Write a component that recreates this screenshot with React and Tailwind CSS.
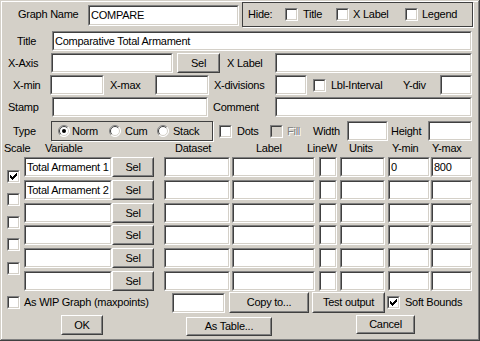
const CHECK = [
  [6, 0], [5, 1], [6, 1], [0, 2], [4, 2], [5, 2], [6, 2],
  [0, 3], [1, 3], [3, 3], [4, 3], [5, 3],
  [0, 4], [1, 4], [2, 4], [3, 4], [4, 4],
  [1, 5], [2, 5], [3, 5], [2, 6],
];

function Sunken({ className = "", inner = "bg-white", children }) {
  return (
    <div className={`shrink-0 border border-t-[#808080] border-l-[#808080] border-r-white border-b-white ${className}`}>
      <div className={`h-full w-full border border-t-[#404040] border-l-[#404040] border-r-[#d4d0c8] border-b-[#d4d0c8] ${inner}`}>
        {children}
      </div>
    </div>
  );
}

function Edit({ className = "", value }) {
  return (
    <Sunken className={className} inner="flex items-center bg-white pl-[1px] overflow-hidden whitespace-nowrap">
      {value}
    </Sunken>
  );
}

function Btn({ className = "", children }) {
  return (
    <div className={`shrink-0 border border-t-white border-l-white border-r-[#404040] border-b-[#404040] ${className}`}>
      <div className="flex h-full w-full items-center justify-center border border-t-[#d4d0c8] border-l-[#d4d0c8] border-r-[#808080] border-b-[#808080] whitespace-nowrap">
        {children}
      </div>
    </div>
  );
}

function Check({ checked, disabled, className = "" }) {
  return (
    <Sunken className={`h-[13px] w-[13px] ${className}`} inner={disabled ? "bg-[#d4d0c8]" : "bg-white"}>
      {checked && (
        <svg width="9" height="9" viewBox="0 0 9 9" shapeRendering="crispEdges" className="block">
          {CHECK.map(([x, y]) => (
            <rect key={`${x}-${y}`} x={x + 1} y={y + 1} width="1" height="1" fill="#000" />
          ))}
        </svg>
      )}
    </Sunken>
  );
}

function Radio({ checked }) {
  return (
    <svg width="12" height="12" viewBox="0 0 12 12" className="shrink-0 block">
      <circle cx="6" cy="6" r="5.5" fill="#fff" />
      <path d="M2.1 9.9 A5.5 5.5 0 0 1 9.9 2.1" stroke="#808080" fill="none" />
      <path d="M9.9 2.1 A5.5 5.5 0 0 1 2.1 9.9" stroke="#fff" fill="none" />
      <path d="M2.8 9.2 A4.5 4.5 0 0 1 9.2 2.8" stroke="#404040" fill="none" />
      <path d="M9.2 2.8 A4.5 4.5 0 0 1 2.8 9.2" stroke="#d4d0c8" fill="none" />
      {checked && <circle cx="6" cy="6" r="2" fill="#000" />}
    </svg>
  );
}

function L({ w, className = "", children }) {
  return <span className={`shrink-0 whitespace-nowrap ${w} ${className}`}>{children}</span>;
}

const rows = [
  { v: "Total Armament 1", min: "0", max: "800", top: "mt-0" },
  { v: "Total Armament 2", top: "mt-[3px]" },
  { v: "", top: "mt-[3px]" },
  { v: "", top: "mt-[2px]" },
  { v: "", top: "mt-[3px]" },
  { v: "", top: "mt-[3px]" },
];

export default function App() {
  return (
    <div className="flex h-[341px] w-[480px] flex-col overflow-hidden bg-[#d4d0c8] font-['Liberation_Sans',Arial,sans-serif] text-[11px] leading-none tracking-[-0.25px] text-black shadow-[inset_-1px_-1px_0_#404040,inset_1px_1px_0_#d4d0c8,inset_-2px_-2px_0_#808080,inset_2px_2px_0_#fff]">
      {/* graph name + hide */}
      <div className="mt-[2px] flex h-[25px] shrink-0 items-center">
        <L w="ml-[18px] w-[70px]">Graph Name</L>
        <Edit className="mt-[1px] h-[21px] w-[151px]" value="COMPARE" />
        <div className="ml-[3px] flex h-[25px] w-[231px] shrink-0 items-center border border-[#404040] shadow-[1px_1px_0_#fff]">
          <L w="ml-[5px] w-[37px]">Hide:</L>
          <Check />
          <L w="ml-[5px] w-[33px]">Title</L>
          <Check />
          <L w="ml-[4px] w-[52px]">X Label</L>
          <Check />
          <L w="ml-[4px]">Legend</L>
        </div>
      </div>

      <div className="mt-[4px] flex h-[20px] shrink-0 items-center">
        <L w="ml-[17px] w-[35px]">Title</L>
        <Edit className="h-[20px] w-[420px]" value="Comparative Total Armament" />
      </div>

      <div className="mt-[2px] flex h-[20px] shrink-0 items-center">
        <L w="ml-[8px] w-[43px]">X-Axis</L>
        <Edit className="h-[20px] w-[122px]" />
        <Btn className="ml-[4px] h-[20px] w-[43px]">Sel</Btn>
        <L w="ml-[7px] w-[48px]">X Label</L>
        <Edit className="h-[20px] w-[197px]" />
      </div>

      <div className="mt-[2px] flex h-[20px] shrink-0 items-center">
        <L w="ml-[13px] w-[37px]">X-min</L>
        <Edit className="h-[20px] w-[54px]" />
        <L w="ml-[6px] w-[45px]">X-max</L>
        <Edit className="h-[20px] w-[54px]" />
        <L w="ml-[5px] w-[61px]">X-divisions</L>
        <Edit className="h-[20px] w-[32px]" />
        <Check className="ml-[6px]" />
        <L w="ml-[5px] w-[72px]">Lbl-Interval</L>
        <L w="w-[37px]">Y-div</L>
        <Edit className="h-[20px] w-[32px]" />
      </div>

      <div className="mt-[2px] flex h-[20px] shrink-0 items-center">
        <L w="ml-[8px] w-[44px]">Stamp</L>
        <Edit className="h-[20px] w-[156px]" />
        <L w="ml-[5px] w-[62px]">Comment</L>
        <Edit className="h-[20px] w-[197px]" />
      </div>

      {/* type row */}
      <div className="mt-[4px] flex h-[20px] shrink-0 items-center">
        <L w="ml-[13px] w-[38px]">Type</L>
        <div className="flex h-[20px] w-[162px] shrink-0 items-center border border-[#404040] shadow-[1px_1px_0_#fff]">
          <span className="ml-[6px]" />
          <Radio checked />
          <L w="ml-[2px] w-[37px]">Norm</L>
          <Radio />
          <L w="ml-[4px] w-[32px]">Cum</L>
          <Radio />
          <L w="ml-[4px]">Stack</L>
        </div>
        <Check className="ml-[6px]" />
        <L w="ml-[5px] w-[33px]">Dots</L>
        <Check disabled />
        <L w="ml-[4px] w-[26px]" className="text-[#808080] [text-shadow:1px_1px_0_#fff]">Fill</L>
        <L w="w-[34px]">Width</L>
        <Edit className="h-[20px] w-[41px]" />
        <L w="ml-[3px] w-[37px]">Height</L>
        <Edit className="h-[20px] w-[44px]" />
      </div>

      {/* column headers */}
      <div className="mt-[1px] flex h-[12px] shrink-0 items-center">
        <L w="ml-[4px] w-[41px]">Scale</L>
        <L w="w-[130px]">Variable</L>
        <L w="w-[81px]">Dataset</L>
        <L w="w-[51px]">Label</L>
        <L w="w-[42px]">LineW</L>
        <L w="w-[43px]">Units</L>
        <L w="w-[40px]">Y-min</L>
        <L w="">Y-max</L>
      </div>

      {/* variable table */}
      <div className="mt-[3px] flex shrink-0">
        <div className="ml-[7px] flex w-[13px] shrink-0 flex-col">
          <Check checked className="mt-[13px]" />
          <Check className="mt-[10px]" />
          <Check className="mt-[10px]" />
          <Check className="mt-[9px]" />
          <Check className="mt-[11px]" />
        </div>
        <div className="ml-[4px] flex flex-col">
          {rows.map((r, i) => (
            <div key={i} className={`flex h-[20px] items-center ${r.top}`}>
              <Edit className="h-[20px] w-[88px]" value={r.v} />
              <Btn className="h-[20px] w-[42px]">Sel</Btn>
              <Edit className="ml-[10px] h-[20px] w-[66px]" />
              <Edit className="ml-[2px] h-[20px] w-[83px]" />
              <Edit className="ml-[4px] h-[20px] w-[18px]" />
              <Edit className="ml-[3px] h-[20px] w-[45px]" />
              <Edit className="ml-[3px] h-[20px] w-[42px]" value={r.min} />
              <Edit className="ml-[1px] h-[20px] w-[41px]" value={r.max} />
            </div>
          ))}
        </div>
      </div>

      {/* wip row */}
      <div className="mt-[1px] flex h-[21px] shrink-0 items-center">
        <Check className="ml-[7px]" />
        <L w="ml-[4px] w-[148px]">As WIP Graph (maxpoints)</L>
        <Edit className="h-[20px] w-[53px]" />
        <Btn className="ml-[4px] h-[21px] w-[80px]">Copy to...</Btn>
        <Btn className="ml-[3px] h-[21px] w-[73px]">Test output</Btn>
        <Check checked className="ml-[2px]" />
        <L w="ml-[5px]">Soft Bounds</L>
      </div>

      {/* dialog buttons */}
      <div className="mt-[2px] flex h-[22px] shrink-0 items-start">
        <Btn className="ml-[61px] h-[20px] w-[42px]">OK</Btn>
        <Btn className="ml-[83px] mt-[2px] h-[19px] w-[86px]">As Table...</Btn>
        <Btn className="ml-[84px] h-[19px] w-[59px]">Cancel</Btn>
      </div>
    </div>
  );
}
